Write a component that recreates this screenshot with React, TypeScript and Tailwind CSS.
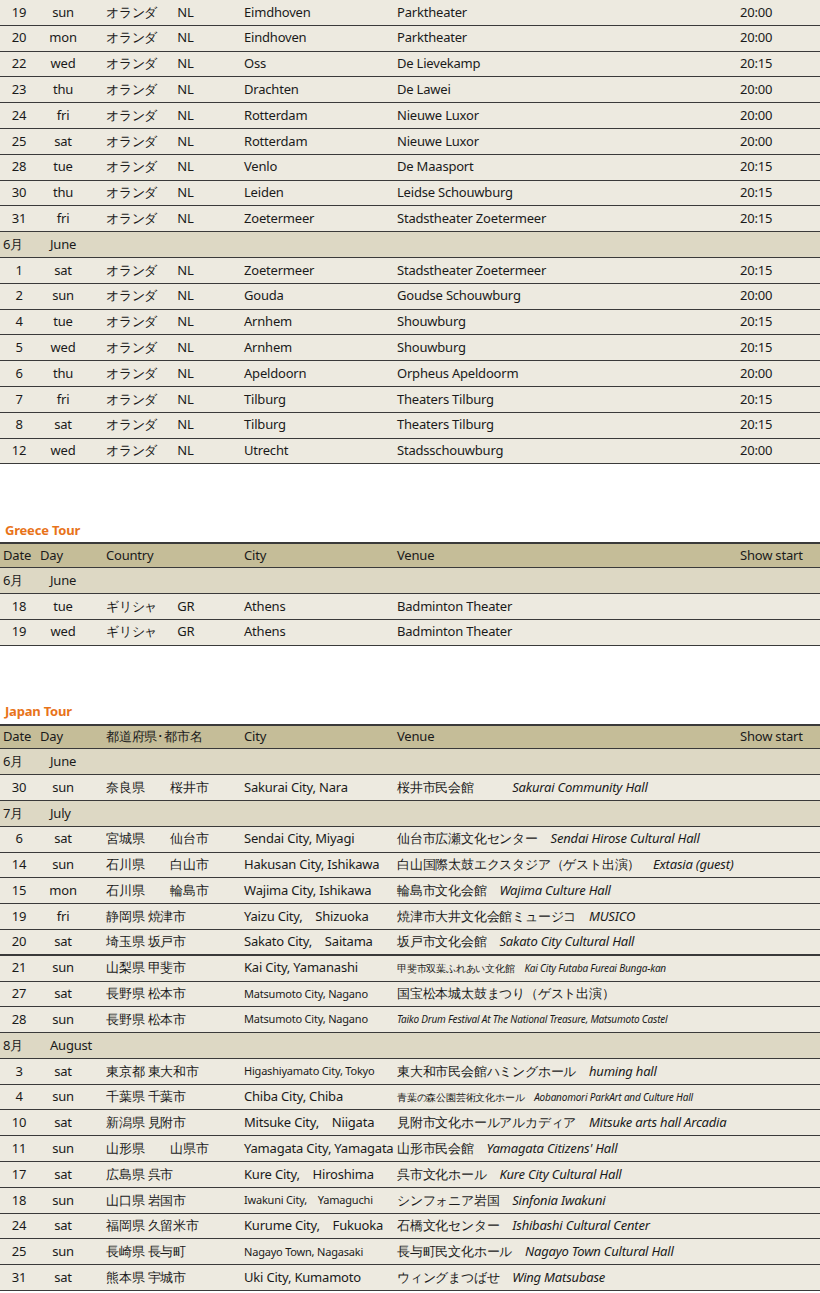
type Row = {
  d?: string;
  w?: string;
  c?: string;
  cc?: string;
  city?: string;
  cs?: boolean;
  v?: string;
  ve?: string;
  vs?: boolean;
  t?: string;
  month?: [string, string];
  thick?: boolean;
};

const nl = (d: string, w: string, city: string, v: string, t: string): Row => ({ d, w, c: "オランダ", cc: "NL", city, v, t });

const netherlands: Row[] = [
  nl("19", "sun", "Eimdhoven", "Parktheater", "20:00"),
  nl("20", "mon", "Eindhoven", "Parktheater", "20:00"),
  nl("22", "wed", "Oss", "De Lievekamp", "20:15"),
  nl("23", "thu", "Drachten", "De Lawei", "20:00"),
  nl("24", "fri", "Rotterdam", "Nieuwe Luxor", "20:00"),
  nl("25", "sat", "Rotterdam", "Nieuwe Luxor", "20:00"),
  nl("28", "tue", "Venlo", "De Maasport", "20:15"),
  nl("30", "thu", "Leiden", "Leidse Schouwburg", "20:15"),
  nl("31", "fri", "Zoetermeer", "Stadstheater Zoetermeer", "20:15"),
  { month: ["6月", "June"] },
  nl("1", "sat", "Zoetermeer", "Stadstheater Zoetermeer", "20:15"),
  nl("2", "sun", "Gouda", "Goudse Schouwburg", "20:00"),
  nl("4", "tue", "Arnhem", "Shouwburg", "20:15"),
  nl("5", "wed", "Arnhem", "Shouwburg", "20:15"),
  nl("6", "thu", "Apeldoorn", "Orpheus Apeldoorm", "20:00"),
  nl("7", "fri", "Tilburg", "Theaters Tilburg", "20:15"),
  nl("8", "sat", "Tilburg", "Theaters Tilburg", "20:15"),
  nl("12", "wed", "Utrecht", "Stadsschouwburg", "20:00"),
];

const greece: Row[] = [
  { month: ["6月", "June"] },
  { d: "18", w: "tue", c: "ギリシャ", cc: "GR", city: "Athens", v: "Badminton Theater" },
  { d: "19", w: "wed", c: "ギリシャ", cc: "GR", city: "Athens", v: "Badminton Theater" },
];

const japan: Row[] = [
  { month: ["6月", "June"] },
  { d: "30", w: "sun", c: "奈良県　　桜井市", city: "Sakurai City, Nara", v: "桜井市民会館　　　", ve: "Sakurai Community Hall" },
  { month: ["7月", "July"] },
  { d: "6", w: "sat", c: "宮城県　　仙台市", city: "Sendai City, Miyagi", v: "仙台市広瀬文化センター　", ve: "Sendai Hirose Cultural Hall" },
  { d: "14", w: "sun", c: "石川県　　白山市", city: "Hakusan City, Ishikawa", v: "白山国際太鼓エクスタジア（ゲスト出演）　", ve: "Extasia (guest)" },
  { d: "15", w: "mon", c: "石川県　　輪島市", city: "Wajima City, Ishikawa", v: "輪島市文化会館　", ve: "Wajima Culture Hall" },
  { d: "19", w: "fri", c: "静岡県 焼津市", city: "Yaizu City,　Shizuoka", v: "焼津市大井文化会館ミュージコ　", ve: "MUSICO" },
  { d: "20", w: "sat", c: "埼玉県 坂戸市", city: "Sakato City,　Saitama", v: "坂戸市文化会館　", ve: "Sakato City Cultural Hall", thick: true },
  { d: "21", w: "sun", c: "山梨県 甲斐市", city: "Kai City, Yamanashi", v: "甲斐市双葉ふれあい文化館　", ve: "Kai City Futaba Fureai Bunga-kan", vs: true },
  { d: "27", w: "sat", c: "長野県 松本市", city: "Matsumoto City, Nagano", cs: true, v: "国宝松本城太鼓まつり（ゲスト出演）" },
  { d: "28", w: "sun", c: "長野県 松本市", city: "Matsumoto City, Nagano", cs: true, ve: "Taiko Drum Festival At The National Treasure, Matsumoto Castel", vs: true },
  { month: ["8月", "August"] },
  { d: "3", w: "sat", c: "東京都 東大和市", city: "Higashiyamato City, Tokyo", cs: true, v: "東大和市民会館ハミングホール　", ve: "huming hall" },
  { d: "4", w: "sun", c: "千葉県 千葉市", city: "Chiba City, Chiba", v: "青葉の森公園芸術文化ホール　", ve: "Aobanomori ParkArt and Culture Hall", vs: true },
  { d: "10", w: "sat", c: "新潟県 見附市", city: "Mitsuke City,　Niigata", v: "見附市文化ホールアルカディア　", ve: "Mitsuke arts hall Arcadia" },
  { d: "11", w: "sun", c: "山形県　　山県市", city: "Yamagata City, Yamagata", v: "山形市民会館　", ve: "Yamagata Citizens' Hall" },
  { d: "17", w: "sat", c: "広島県 呉市", city: "Kure City,　Hiroshima", v: "呉市文化ホール　", ve: "Kure City Cultural Hall" },
  { d: "18", w: "sun", c: "山口県 岩国市", city: "Iwakuni City,　Yamaguchi", cs: true, v: "シンフォニア岩国　", ve: "Sinfonia Iwakuni" },
  { d: "24", w: "sat", c: "福岡県 久留米市", city: "Kurume City,　Fukuoka", v: "石橋文化センター　", ve: "Ishibashi Cultural Center" },
  { d: "25", w: "sun", c: "長崎県 長与町", city: "Nagayo Town, Nagasaki", cs: true, v: "長与町民文化ホール　", ve: "Nagayo Town Cultural Hall" },
  { d: "31", w: "sat", c: "熊本県 宇城市", city: "Uki City, Kumamoto", v: "ウィングまつばせ　", ve: "Wing Matsubase" },
];

const grid = "grid grid-cols-[38px_50px_156px_153px_343px_1fr] items-center h-[25.8px]";

const TableRow = ({ r }: { r: Row }) => {
  if (r.month) {
    return (
      <div className="flex items-center h-[25.8px] bg-[#ddd8c4] border-b border-[#3a3a3a]">
        <span className="pl-[3px] w-[50px]">{r.month[0]}</span>
        <span>{r.month[1]}</span>
      </div>
    );
  }
  return (
    <div className={`${grid} bg-[#edeae0] ${r.thick ? "border-b-2" : "border-b"} border-[#3a3a3a]`}>
      <span className="text-center">{r.d}</span>
      <span className="text-center">{r.w}</span>
      <span className="pl-[18px] whitespace-pre">
        {r.c}
        {r.cc && <span className="pl-[20px]">{r.cc}</span>}
      </span>
      <span className={`whitespace-pre ${r.cs ? "text-[11px]" : ""}`}>{r.city}</span>
      <span className={`whitespace-pre ${r.vs ? "text-[10px]" : ""}`}>
        {r.v}
        {r.ve && <i className="italic">{r.ve}</i>}
      </span>
      <span>{r.t}</span>
    </div>
  );
};

const Header = ({ country }: { country: string }) => (
  <div className={`${grid} bg-[#c5bd98] border-t-2 border-b border-[#3a3a3a]`}>
    <span className="pl-[3px]">Date</span>
    <span className="pl-[2px]">Day</span>
    <span className="pl-[18px]">{country}</span>
    <span>City</span>
    <span>Venue</span>
    <span>Show start</span>
  </div>
);

const Title = ({ children }: { children: string }) => (
  <div className="text-[#e8731a] font-bold text-[13px] pl-[5px] h-[20px] flex items-end pb-[2px]">{children}</div>
);

export default function App() {
  return (
    <div className="w-[820px] bg-white text-[13px] text-[#1a1a1a] font-['DejaVu_Sans','Noto_Sans_CJK_JP',sans-serif] tracking-[-0.2px]">
      <div>
        {netherlands.map((r, i) => (
          <TableRow key={i} r={r} />
        ))}
      </div>
      <div className="h-[58px]" />
      <Title>Greece Tour</Title>
      <Header country="Country" />
      {greece.map((r, i) => (
        <TableRow key={i} r={r} />
      ))}
      <div className="h-[58px]" />
      <Title>Japan Tour</Title>
      <Header country="都道府県･都市名" />
      {japan.map((r, i) => (
        <TableRow key={i} r={r} />
      ))}
    </div>
  );
}
